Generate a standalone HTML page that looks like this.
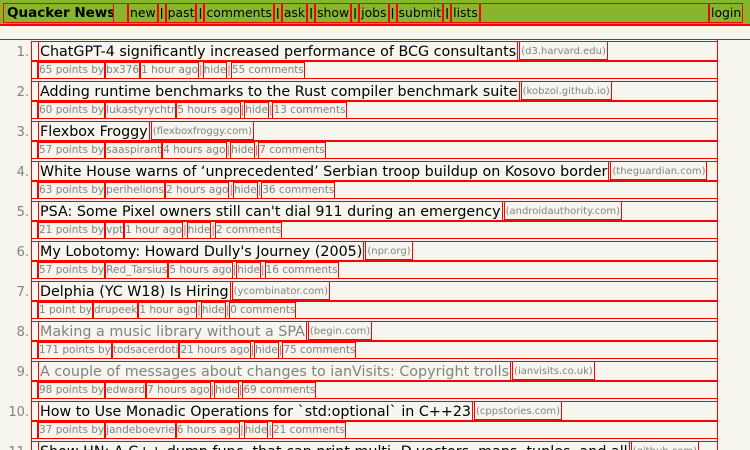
<!DOCTYPE html>
<html><head><style>
*{box-sizing:border-box;margin:0;padding:0}
html,body{width:750px;height:450px;overflow:hidden}
body{background:#f6f6ef;font-family:"DejaVu Sans","Liberation Sans",sans-serif;position:relative}
#hd{position:absolute;left:0;top:0;width:750px;height:26px;background:#89b52d;border-bottom:2px solid #f00;white-space:nowrap}
#nav{position:absolute;left:3px;top:3px;height:20px;display:flex;font-size:12.4px;line-height:18px}
#nav span{border:1px solid #f00;height:20px;padding:0 1px;color:#000}
#nav .b{font-weight:bold;font-size:13.5px;padding:0 1px 0 3px;width:111px;overflow:hidden}
#nav .s{font-weight:bold;padding:0 1px;font-size:11px}
#nav .gap{width:14px;border-left:none}
#login{position:absolute;left:709px;top:3px;height:20px;font-size:12.4px;line-height:18px;border:1px solid #f00;padding:0 1px}
.it{position:absolute;left:0;width:750px;height:40px}
.rk{position:absolute;left:0;width:31px;text-align:right;top:5px;font-size:13px;color:#828282;padding-right:2px}
.tr{position:absolute;left:31px;width:687px;top:1px;height:21px;border:1px solid #f00;border-bottom:2px solid #f00}
.ttl{position:absolute;left:6px;top:-1px;height:21px;font-size:14.3px;line-height:20px;white-space:nowrap;color:#000}
.ttl span{border:1px solid #f00;padding:0 1px;display:inline-block;height:21px}
.ttl small{font-size:10px;color:#828282;border:1px solid #f00;display:inline-block;height:19px;line-height:19px;vertical-align:top;margin-left:1px;padding:0 1px}
.sub{position:absolute;left:37px;top:22px;height:17px;font-size:10.5px;line-height:15px;color:#828282;white-space:nowrap;border-left:1px solid #f00}
.sub span{border:1px solid #f00;display:inline-block;height:17px;padding:0}
.sp{position:absolute;left:31px;width:687px;top:38px;height:4px;border:1px solid #f00}
.vl{position:absolute;left:31px;top:22px;height:17px;border-left:1px solid #f00}
.g{color:#828282!important}
</style></head><body>
<div id="hd">
<div id="nav"><span class="b">Quacker News</span><span class="gap"></span><span>new</span><span class="s">|</span><span>past</span><span class="s">|</span><span>comments</span><span class="s">|</span><span>ask</span><span class="s">|</span><span>show</span><span class="s">|</span><span>jobs</span><span class="s">|</span><span>submit</span><span class="s">|</span><span>lists</span><span style="width:229px"></span></div>
<div id="login">login</div>
</div>
<div style="position:absolute;left:0;top:39px;width:750px;border-top:1px solid #f00"></div>
<div style="position:absolute;left:717px;top:39px;height:411px;border-left:1px solid #f00"></div>

<div class="it" style="top:40px"><div class="rk">1.</div><div class="tr"><div class="ttl"><span>ChatGPT-4 significantly increased performance of BCG consultants</span><small>(d3.harvard.edu)</small></div></div><div class="vl"></div><div class="sub"><span>65 points by</span><span>bx376</span><span>1 hour ago</span>|<span>hide</span>|<span>55 comments</span></div><div class="sp"></div></div>
<div class="it" style="top:80px"><div class="rk">2.</div><div class="tr"><div class="ttl"><span>Adding runtime benchmarks to the Rust compiler benchmark suite</span><small>(kobzol.github.io)</small></div></div><div class="vl"></div><div class="sub"><span>60 points by</span><span>lukastyrychtr</span><span>5 hours ago</span>|<span>hide</span>|<span>13 comments</span></div><div class="sp"></div></div>
<div class="it" style="top:120px"><div class="rk">3.</div><div class="tr"><div class="ttl"><span>Flexbox Froggy</span><small>(flexboxfroggy.com)</small></div></div><div class="vl"></div><div class="sub"><span>57 points by</span><span>saaspirant</span><span>4 hours ago</span>|<span>hide</span>|<span>7 comments</span></div><div class="sp"></div></div>
<div class="it" style="top:160px"><div class="rk">4.</div><div class="tr"><div class="ttl"><span>White House warns of ‘unprecedented’ Serbian troop buildup on Kosovo border</span><small>(theguardian.com)</small></div></div><div class="vl"></div><div class="sub"><span>63 points by</span><span>perihelions</span><span>2 hours ago</span>|<span>hide</span>|<span>36 comments</span></div><div class="sp"></div></div>
<div class="it" style="top:200px"><div class="rk">5.</div><div class="tr"><div class="ttl"><span>PSA: Some Pixel owners still can't dial 911 during an emergency</span><small>(androidauthority.com)</small></div></div><div class="vl"></div><div class="sub"><span>21 points by</span><span>vpt</span><span>1 hour ago</span>|<span>hide</span>|<span>2 comments</span></div><div class="sp"></div></div>
<div class="it" style="top:240px"><div class="rk">6.</div><div class="tr"><div class="ttl"><span>My Lobotomy: Howard Dully's Journey (2005)</span><small>(npr.org)</small></div></div><div class="vl"></div><div class="sub"><span>57 points by</span><span>Red_Tarsius</span><span>5 hours ago</span>|<span>hide</span>|<span>16 comments</span></div><div class="sp"></div></div>
<div class="it" style="top:280px"><div class="rk">7.</div><div class="tr"><div class="ttl"><span>Delphia (YC W18) Is Hiring</span><small>(ycombinator.com)</small></div></div><div class="vl"></div><div class="sub"><span>1 point by</span><span>drupeek</span><span>1 hour ago</span>|<span>hide</span>|<span>0 comments</span></div><div class="sp"></div></div>
<div class="it" style="top:320px"><div class="rk">8.</div><div class="tr"><div class="ttl"><span class="g">Making a music library without a SPA</span><small>(begin.com)</small></div></div><div class="vl"></div><div class="sub"><span>171 points by</span><span>todsacerdoti</span><span>21 hours ago</span>|<span>hide</span>|<span>75 comments</span></div><div class="sp"></div></div>
<div class="it" style="top:360px"><div class="rk">9.</div><div class="tr"><div class="ttl"><span class="g">A couple of messages about changes to ianVisits: Copyright trolls</span><small>(ianvisits.co.uk)</small></div></div><div class="vl"></div><div class="sub"><span>98 points by</span><span>edward</span><span>7 hours ago</span>|<span>hide</span>|<span>69 comments</span></div><div class="sp"></div></div>
<div class="it" style="top:400px"><div class="rk">10.</div><div class="tr"><div class="ttl"><span>How to Use Monadic Operations for `std:optional` in C++23</span><small>(cppstories.com)</small></div></div><div class="vl"></div><div class="sub"><span>37 points by</span><span>jandeboevrie</span><span>6 hours ago</span>|<span>hide</span>|<span>21 comments</span></div><div class="sp"></div></div>
<div class="it" style="top:440px;height:10px;overflow:hidden"><div class="rk">11.</div><div class="tr"><div class="ttl"><span>Show HN: A C++ dump func. that can print multi.-D vectors, maps, tuples, and all</span><small>(github.com)</small></div></div></div>
</body></html>
